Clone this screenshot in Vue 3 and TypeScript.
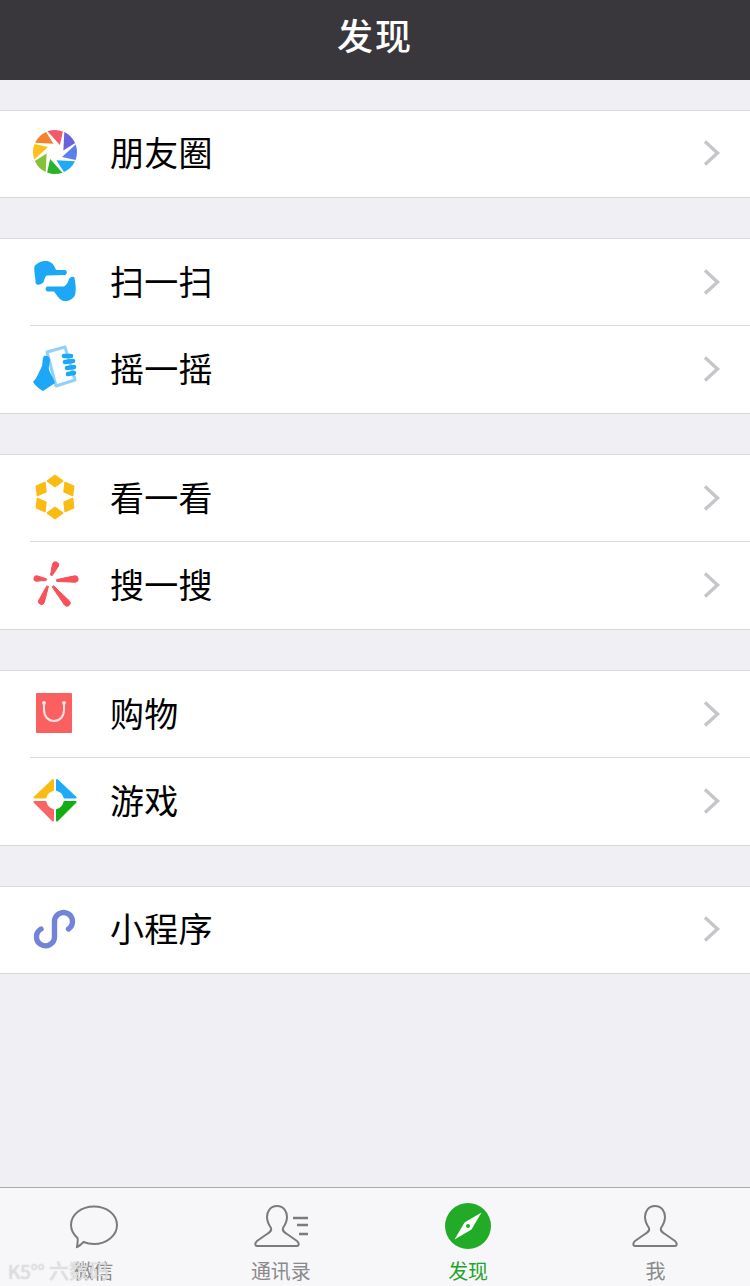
<template>
  <div class="page">
    <header class="top-bar">发现</header>

    <main class="list">
      <section v-for="(group, i) in groups" :key="i" class="group">
        <div v-for="row in group" :key="row.label" class="row">
          <svg class="row-icon" width="50" height="50" viewBox="0 0 50 50">
            <path
              v-for="(p, j) in icons[row.icon]"
              :key="j"
              :d="p.d"
              :fill="p.fill ?? 'none'"
              :stroke="p.stroke ?? 'none'"
              :stroke-width="p.width ?? 0"
              stroke-linecap="round"
              stroke-linejoin="round"
            />
          </svg>
          <span class="row-label">{{ row.label }}</span>
          <svg class="chevron" width="18" height="28" viewBox="0 0 18 28">
            <path d="M2 2.5 L14.5 14 L2 25.5" fill="none" stroke="#c5c5ca" stroke-width="3.4" />
          </svg>
        </div>
      </section>
    </main>

    <footer class="tab-bar">
      <div v-for="tab in tabs" :key="tab.label" class="tab" :class="{ active: tab.active }">
        <svg width="56" height="48" viewBox="0 0 56 48">
          <template v-if="tab.icon === 'chat'">
            <path
              d="M28 4.5 C40.5 4.5 51 12.5 51 23 C51 33.5 40.5 42 28 42 C24 42 20 41 17.5 40 C15.5 42 13 44.5 11 45 C11.5 42 12 38 11.5 36 C7.5 32.5 5 28 5 23 C5 12.5 15.5 4.5 28 4.5 Z"
              fill="none"
              stroke="#7b7b7f"
              stroke-width="2"
            />
          </template>
          <template v-else-if="tab.icon === 'contacts'">
            <path :d="personPath" transform="translate(1 3)" fill="none" stroke="#7b7b7f" stroke-width="2" />
            <path d="M40 16 H55 M44 23 H55 M46 32 H55" fill="none" stroke="#7b7b7f" stroke-width="2.4" />
          </template>
          <template v-else-if="tab.icon === 'compass'">
            <circle cx="28" cy="24" r="23" fill="#22ab27" />
            <path d="M41.5 10.5 L31.5 27.5 L14.5 37.5 L24.5 20.5 Z" fill="#fff" />
            <circle cx="28" cy="24" r="2" fill="#22ab27" />
          </template>
          <template v-else>
            <path :d="personPath" transform="translate(5 3)" fill="none" stroke="#7b7b7f" stroke-width="2" />
          </template>
        </svg>
        <span class="tab-label">{{ tab.label }}</span>
      </div>
      <div class="watermark"><span class="mark-logo">K5°°</span>六数码</div>
    </footer>
  </div>
</template>

<script setup lang="ts">
interface IconPart {
  d: string
  fill?: string
  stroke?: string
  width?: number
}

const polar = (r: number, deg: number, cx = 25, cy = 24) => {
  const rad = (deg * Math.PI) / 180
  return `${(cx + r * Math.cos(rad)).toFixed(2)} ${(cy + r * Math.sin(rad)).toFixed(2)}`
}

// Eight blades of the camera aperture, clockwise from the top
const blades = ['#f3596b', '#6a62dc', '#5a80ee', '#1eaaf7', '#2bb32b', '#86c13a', '#fcc21b', '#f4812c'].map(
  (fill, i): IconPart => {
    const start = -110 + i * 45
    return {
      d: `M${polar(22, start)} A22 22 0 0 1 ${polar(22, start + 41)} L${polar(8.5, start + 55)} Z`,
      fill
    }
  }
)

// Six diamonds around a ring
const diamonds = [0, 60, 120, 180, 240, 300].map((deg): IconPart => {
  const rad = (deg * Math.PI) / 180
  const rot = (x: number, y: number) =>
    `${(25 + x * Math.cos(rad) - y * Math.sin(rad)).toFixed(2)} ${(24 + x * Math.sin(rad) + y * Math.cos(rad)).toFixed(2)}`
  return {
    d: `M${rot(0, -21.5)} L${rot(7.5, -16)} L${rot(0, -10.5)} L${rot(-7.5, -16)} Z`,
    fill: '#fabb13',
    stroke: '#fabb13',
    width: 1.6
  }
})

// Petal that narrows toward the inner end and is round at the outer end
const petal = (x1: number, y1: number, x2: number, y2: number, r: number): IconPart => {
  const len = Math.hypot(x2 - x1, y2 - y1)
  const nx = (-(y2 - y1) / len) * r
  const ny = ((x2 - x1) / len) * r
  return {
    d: `M${(x1 + nx * 0.3).toFixed(2)} ${(y1 + ny * 0.3).toFixed(2)} L${(x2 + nx).toFixed(2)} ${(y2 + ny).toFixed(2)} A${r} ${r} 0 0 0 ${(x2 - nx).toFixed(2)} ${(y2 - ny).toFixed(2)} L${(x1 - nx * 0.3).toFixed(2)} ${(y1 - ny * 0.3).toFixed(2)} Z`,
    fill: '#f6525a',
    stroke: '#f6525a',
    width: 1
  }
}

const blue = '#1ea7f5'

const icons: Record<string, IconPart[]> = {
  moments: blades,
  scan: [
    {
      d: 'M4.5 9 C8 5 14 3 19 4.5 C23 6 25 10 26 13 L35 13 C37.5 13.5 37.5 17.5 35 18 L17 18.5 C15 19 15 22 13.5 25 C11 28 7 29 5.5 26 C6 22 3.5 14 4.5 9 Z',
      fill: blue
    },
    {
      d: 'M17 29.5 L34 29.5 C37 28 38 25 39 22 C41 19.5 44 19 44.5 21 C45.5 26 46.5 33 45 38 C42.5 43.5 36 45 32 43.5 C28 41 26 37 24 34.5 L18 34.5 C15 34 15 30.5 17 29.5 Z',
      fill: blue
    }
  ],
  shake: [
    { d: 'M17 8 L35 3 L45 36 L26 42 Z', fill: '#fff', stroke: '#8ed2fa', width: 3 },
    {
      d: 'M3 38 C7 34 9 28 12 22 C13 18 12 15 14 12 C17 11 20 13 20 16 C19.5 20 18 24 19.5 27 C21 31 24 35 25 39 L13 47 C9 45 5 41 3 38 Z',
      fill: blue
    },
    { d: 'M34 12 L41 12 M35 18 L43 17 M37 24 L44 23 M38 30 L44 29', stroke: blue, width: 4.6 }
  ],
  look: diamonds,
  search: [
    petal(21.5, 15, 25.5, 5, 3.2),
    petal(27, 20.5, 45, 19, 3.2),
    petal(16, 19.5, 6.5, 18.5, 2.8),
    petal(17.5, 26.5, 11.5, 41.5, 3),
    petal(23, 26.5, 37, 43, 3.2)
  ],
  shop: [
    { d: 'M7 4 H41 Q42 4 42 5 V43 Q42 44 41 44 H7 Q6 44 6 43 V5 Q6 4 7 4 Z', fill: '#fa6060' },
    { d: 'M14 14 V21 C14 27 18 32 24 32 C30 32 34 27 34 21 V14', stroke: '#fde4e4', width: 2 },
    { d: 'M14 14 H14.01 M34 14 H34.01', stroke: '#fde4e4', width: 3.8 }
  ],
  games: [
    { d: 'M23 4 L4.5 21.5 H15.5 A10 10 0 0 1 23 14 Z', fill: '#fabb13', stroke: '#fabb13', width: 2 },
    { d: 'M27 4 L45.5 21.5 H34.5 A10 10 0 0 0 27 14 Z', fill: '#1eaaf7', stroke: '#1eaaf7', width: 2 },
    { d: 'M4.5 26 H15.5 A10 10 0 0 0 23 34 V44.5 Z', fill: '#f96464', stroke: '#f96464', width: 2 },
    { d: 'M45.5 26 H34.5 A10 10 0 0 1 27 34 V44.5 Z', fill: '#12ad12', stroke: '#12ad12', width: 2 }
  ],
  mini: [
    {
      d: 'M11 25 A9 9 0 1 0 24.5 33 V17 A9 9 0 1 1 38.5 25',
      stroke: '#7384d8',
      width: 5.4
    }
  ]
}

const groups = [
  [{ label: '朋友圈', icon: 'moments' }],
  [
    { label: '扫一扫', icon: 'scan' },
    { label: '摇一摇', icon: 'shake' }
  ],
  [
    { label: '看一看', icon: 'look' },
    { label: '搜一搜', icon: 'search' }
  ],
  [
    { label: '购物', icon: 'shop' },
    { label: '游戏', icon: 'games' }
  ],
  [{ label: '小程序', icon: 'mini' }]
]

const personPath =
  'M23 1 C16 1 13 7 13 12 C13 17 15 20 17 23 C18 26 16 27 13 29 L3 36 C0.5 38 1 41 3 41 H43 C45 41 45.5 38 43 36 L33 29 C30 27 28 26 29 23 C31 20 33 17 33 12 C33 7 30 1 23 1 Z'

const tabs = [
  { label: '微信', icon: 'chat', active: false },
  { label: '通讯录', icon: 'contacts', active: false },
  { label: '发现', icon: 'compass', active: true },
  { label: '我', icon: 'me', active: false }
]
</script>

<style scoped>
.page {
  display: flex;
  flex-direction: column;
  height: 1286px;
  background: #efeff4;
  font-family: "Noto Sans CJK SC", "Liberation Sans", sans-serif;
}

.top-bar {
  box-sizing: border-box;
  height: 80px;
  flex-shrink: 0;
  display: flex;
  align-items: center;
  justify-content: center;
  padding-bottom: 12px;
  background: #39373c;
  color: #fff;
  font-size: 36px;
  font-weight: 500;
  letter-spacing: 2px;
}

.list {
  flex: 1;
  display: flex;
  flex-direction: column;
  gap: 40px;
  padding-top: 30px;
}

.group {
  background: #fff;
}

.row {
  position: relative;
  box-sizing: border-box;
  height: 88px;
  display: flex;
  align-items: center;
  padding: 0 29px 2px 30px;
}

.row:first-child {
  border-top: 1px solid #d9d9d9;
}

.row:last-child {
  border-bottom: 1px solid #d9d9d9;
}

/* inset separator between rows */
.row:not(:last-child)::after {
  content: "";
  position: absolute;
  left: 30px;
  right: 0;
  bottom: 0;
  height: 1px;
  background: #d9d9d9;
}

.row-icon {
  flex-shrink: 0;
}

.row-label {
  flex: 1;
  margin: 0 0 3px 30px;
  font-size: 34px;
  letter-spacing: 0.3px;
  color: #000;
}

.chevron {
  flex-shrink: 0;
}

.tab-bar {
  position: relative;
  box-sizing: border-box;
  height: 99px;
  flex-shrink: 0;
  display: grid;
  grid-template-columns: repeat(4, 1fr);
  padding: 14px 1px 0 0;
  border-top: 1px solid #ababab;
  background: #f7f7fa;
}

.tab {
  display: flex;
  flex-direction: column;
  align-items: center;
  color: #8a8a8a;
}

.tab.active {
  color: #22a52a;
}

.tab-label {
  margin-top: 9px;
  font-size: 20px;
  line-height: 24px;
}

/* photo-site stamp lying over the first tab */
.watermark {
  position: absolute;
  left: 8px;
  bottom: 3px;
  font-size: 20px;
  line-height: 24px;
  color: rgba(255, 255, 255, 0.6);
  text-shadow: 0 0 1px #aaa;
}

.mark-logo {
  margin-right: 4px;
  font-size: 19px;
}
</style>
